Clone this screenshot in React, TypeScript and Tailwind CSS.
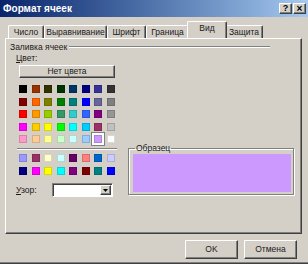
import clsx from "clsx";

const mainColors = [
  ["#000000", "#993300", "#333300", "#003300", "#003366", "#000080", "#333399", "#333333"],
  ["#800000", "#FF6600", "#808000", "#008000", "#008080", "#0000FF", "#666699", "#808080"],
  ["#FF0000", "#FF9900", "#99CC00", "#339966", "#33CCCC", "#3366FF", "#800080", "#969696"],
  ["#FF00FF", "#FFCC00", "#FFFF00", "#00FF00", "#00FFFF", "#00CCFF", "#993366", "#C0C0C0"],
  ["#FF99CC", "#FFCC99", "#FFFF99", "#CCFFCC", "#CCFFFF", "#99CCFF", "#CC99FF", "#FFFFFF"],
];

const chartColors = [
  ["#9999FF", "#993366", "#FFFFCC", "#CCFFFF", "#660066", "#FF8080", "#0066CC", "#CCCCFF"],
  ["#000080", "#FF00FF", "#FFFF00", "#00FFFF", "#800080", "#800000", "#008080", "#0000FF"],
];

const tabs = [
  { label: "Число", w: "w-[36px]" },
  { label: "Выравнивание", w: "w-[63px]" },
  { label: "Шрифт", w: "w-[39px]" },
  { label: "Граница", w: "w-[43px]" },
  { label: "Вид", w: "w-[40px]", active: true },
  { label: "Защита", w: "w-[38px]" },
];

const raised =
  "border border-t-white border-l-white border-r-[#404040] border-b-[#404040] shadow-[inset_-1px_-1px_0_#808080]";

const Swatch = ({ color, selected }: { color: string; selected?: boolean }) => (
  <div
    className={clsx(
      "w-[8px] h-[8px] border border-black/15",
      selected && "shadow-[0_0_0_2px_#fff,0_0_0_3px_#808080]"
    )}
    style={{ backgroundColor: color }}
  />
);

const ColorRows = ({ rows, gap }: { rows: string[][]; gap: string }) => (
  <div className={clsx("flex flex-col ml-[13px] w-[96px]", gap)}>
    {rows.map((row, i) => (
      <div key={i} className="flex justify-between">
        {row.map((c, j) => (
          <Swatch key={j} color={c} selected={c === "#CC99FF" && i === 4} />
        ))}
      </div>
    ))}
  </div>
);

export default function App() {
  return (
    <div className="w-[308px] h-[264px] bg-[#d4d0c8] flex flex-col font-['Liberation_Sans',Arial,sans-serif] text-[8.5px] text-[#1a1a1a] border-b border-b-[#404040] shadow-[inset_0_-1px_0_#808080] overflow-hidden">
      {/* title bar */}
      <div className="h-[17px] flex items-center justify-between pl-[3px] pr-[2px] bg-gradient-to-r from-[#0a246a] to-[#a6caf0]">
        <span className="text-white font-bold text-[10px] leading-none">Формат ячеек</span>
        <div className="flex gap-[1px]">
          <div className={clsx(raised, "w-[13px] h-[11px] bg-[#d4d0c8] flex items-center justify-center text-[9px] font-bold leading-none text-black")}>
            ?
          </div>
          <div className={clsx(raised, "w-[13px] h-[11px] bg-[#d4d0c8] flex items-center justify-center text-[10px] font-bold leading-none text-black")}>
            ×
          </div>
        </div>
      </div>

      {/* tabs */}
      <div className="flex items-end h-[17px] mt-[4px] pl-[8px]">
        {tabs.map((t) => (
          <div
            key={t.label}
            className={clsx(
              "flex justify-center items-center bg-[#d4d0c8] border-l border-t border-l-white border-t-white border-r border-r-[#404040] shadow-[inset_-1px_0_0_#808080] rounded-t-[2px] leading-none",
              t.w,
              t.active ? "h-[17px] -mx-[2px] relative z-10 pb-[3px]" : "h-[14px] mb-[-1px]"
            )}
          >
            {t.label}
          </div>
        ))}
      </div>

      {/* tab panel */}
      <div className="ml-[5px] w-[297px] h-[196px] border border-t-white border-l-white border-r-[#404040] border-b-[#404040] shadow-[inset_-1px_-1px_0_#808080] flex flex-col">
        <div className="flex items-center h-[10px] mt-[3px] pl-[4px] pr-[31px] gap-[2px]">
          <span className="leading-none">Заливка ячеек</span>
          <div className="flex-1 border-t border-t-[#808080] border-b border-b-white" />
        </div>

        <div className="flex">
          <div className="flex flex-col w-[112px]">
            <div className="ml-[10px] mt-[1px] h-[10px] leading-[10px]">
              <span className="underline">Ц</span>вет:
            </div>
            <div className={clsx(raised, "ml-[13px] mt-[2px] w-[96px] h-[13px] flex items-center justify-center leading-none")}>
              Нет цвета
            </div>

            <div className="mt-[7px]">
              <ColorRows rows={mainColors} gap="gap-[4.5px]" />
            </div>

            <div className="ml-[11px] mt-[5px] w-[100px] border-t border-t-[#808080] border-b border-b-white" />

            <div className="mt-[4px]">
              <ColorRows rows={chartColors} gap="gap-[5px]" />
            </div>

            <div className="flex items-center mt-[8px] ml-[10px] h-[14px]">
              <span className="w-[36px] leading-none">
                <span className="underline">У</span>зор:
              </span>
              <div className="w-[61px] h-[14px] bg-white border border-t-[#808080] border-l-[#808080] border-r-white border-b-white shadow-[inset_1px_1px_0_#404040] flex justify-end p-[1px]">
                <div className={clsx(raised, "w-[11px] h-full bg-[#d4d0c8] flex items-center justify-center")}>
                  <svg width="5" height="3" viewBox="0 0 5 3">
                    <path d="M0 0h5L2.5 3z" fill="#000" />
                  </svg>
                </div>
              </div>
            </div>
          </div>

          <div className="ml-[10px] mt-[91px]">
            <fieldset className="w-[166px] h-[52px] border border-[#808080] shadow-[inset_1px_1px_0_#fff,1px_1px_0_#fff] pl-[4px] pr-[2px]">
              <legend className="ml-[2px] px-[1px] leading-[10px]">Образец</legend>
              <div className="mt-[1px] w-[158px] h-[38px] bg-[#cc99ff]" />
            </fieldset>
          </div>
        </div>
      </div>

      {/* buttons */}
      <div className="flex justify-end gap-[6px] mt-[6px] pr-[11px]">
        <div className={clsx(raised, "w-[53px] h-[19px] flex items-center justify-center leading-none")}>OK</div>
        <div className={clsx(raised, "w-[53px] h-[19px] flex items-center justify-center leading-none")}>Отмена</div>
      </div>
    </div>
  );
}
